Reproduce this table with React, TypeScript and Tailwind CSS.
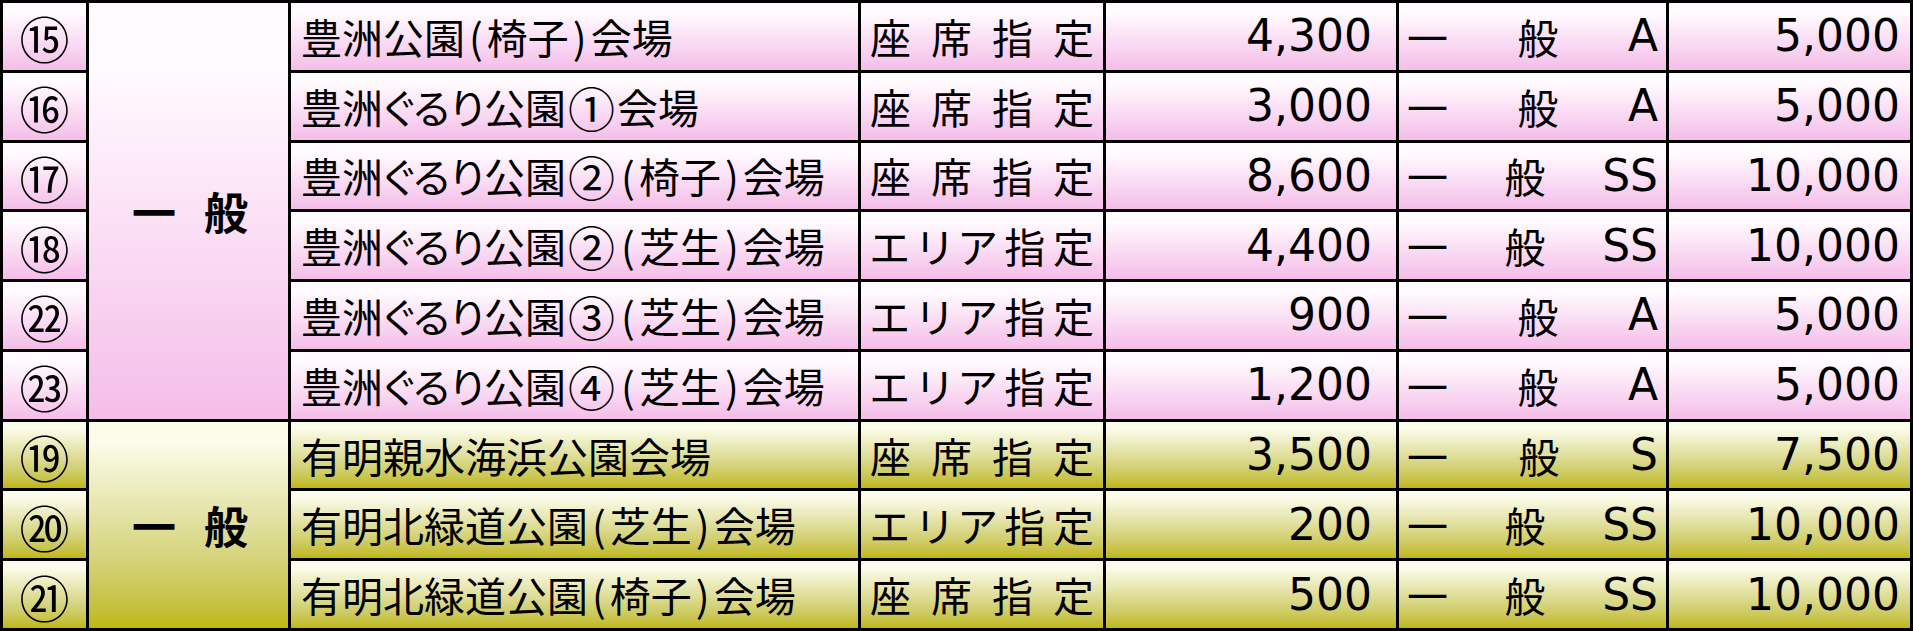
type Row = {
  no: string;
  venue: string;
  kind: string;
  seats: string;
  grade: string;
  price: string;
  group: 'pink' | 'olive';
};

const rows: Row[] = [
  { no: '⑮', venue: '豊洲公園(椅子)会場', kind: '座席指定', seats: '4,300', grade: 'A', price: '5,000', group: 'pink' },
  { no: '⑯', venue: '豊洲ぐるり公園①会場', kind: '座席指定', seats: '3,000', grade: 'A', price: '5,000', group: 'pink' },
  { no: '⑰', venue: '豊洲ぐるり公園②(椅子)会場', kind: '座席指定', seats: '8,600', grade: 'SS', price: '10,000', group: 'pink' },
  { no: '⑱', venue: '豊洲ぐるり公園②(芝生)会場', kind: 'エリア指定', seats: '4,400', grade: 'SS', price: '10,000', group: 'pink' },
  { no: '㉒', venue: '豊洲ぐるり公園③(芝生)会場', kind: 'エリア指定', seats: '900', grade: 'A', price: '5,000', group: 'pink' },
  { no: '㉓', venue: '豊洲ぐるり公園④(芝生)会場', kind: 'エリア指定', seats: '1,200', grade: 'A', price: '5,000', group: 'pink' },
  { no: '⑲', venue: '有明親水海浜公園会場', kind: '座席指定', seats: '3,500', grade: 'S', price: '7,500', group: 'olive' },
  { no: '⑳', venue: '有明北緑道公園(芝生)会場', kind: 'エリア指定', seats: '200', grade: 'SS', price: '10,000', group: 'olive' },
  { no: '㉑', venue: '有明北緑道公園(椅子)会場', kind: '座席指定', seats: '500', grade: 'SS', price: '10,000', group: 'olive' },
];

const fill = {
  pink: 'bg-linear-to-b from-[#fffbfe] from-15% to-[#f4bde9]',
  olive: 'bg-linear-to-b from-[#fcfcea] from-10% to-[#bfb900]',
};

const cjk = "font-['Noto_Sans_CJK_JP',sans-serif] [font-feature-settings:'palt']";
const latin = "font-['DejaVu_Sans','Noto_Sans_CJK_JP',sans-serif]";

// 括弧と丸数字だけ字幅を調整する
function Venue({ text }: { text: string }) {
  return (
    <>
      {text.split('').map((c, k) => {
        if (c === '(' || c === ')') {
          return (
            <span key={k} className="mx-[4px]">
              {c}
            </span>
          );
        }
        if ('①②③④'.includes(c)) {
          return (
            <span key={k} className="[font-feature-settings:normal] text-[47px] mx-[2px]">
              {c}
            </span>
          );
        }
        return c;
      })}
    </>
  );
}

export default function App() {
  return (
    <div className="w-[1913px] h-[631px] bg-black p-[3px] grid grid-cols-[83px_199px_567px_242px_290px_267px_241px] grid-rows-9 gap-[3px] text-black">
      {rows.map((r, i) => (
        <>
          {/* 番号 */}
          <div key={`no-${i}`} className={`${fill[r.group]} flex items-center justify-center font-['Noto_Sans_CJK_JP',sans-serif] text-[50px] leading-none pt-[2px]`}>
            {r.no}
          </div>

          {/* 区分（結合セル） */}
          {(i === 0 || i === 6) && (
            <div
              key={`grp-${i}`}
              className={`${fill[r.group]} ${i === 0 ? 'row-span-6' : 'row-span-3'} flex items-center justify-center gap-[28px] font-['Noto_Sans_CJK_JP',sans-serif] font-bold text-[44px] leading-none pl-[3px]`}
            >
              <span>一</span>
              <span>般</span>
            </div>
          )}

          {/* 会場 */}
          <div key={`venue-${i}`} className={`${fill[r.group]} flex items-center pl-[10px] ${cjk} text-[41px] leading-none whitespace-nowrap`}>
            <Venue text={r.venue} />
          </div>

          {/* 指定 */}
          <div key={`kind-${i}`} className={`${fill[r.group]} flex items-center justify-between px-[9px] ${cjk} text-[41px] leading-none`}>
            {r.kind.split('').map((c, k) => (
              <span key={k}>{c}</span>
            ))}
          </div>

          {/* 席数 */}
          <div key={`seats-${i}`} className={`${fill[r.group]} flex items-center justify-end pr-[24px] ${latin} text-[44px] leading-none`}>
            {r.seats}
          </div>

          {/* 券種 */}
          <div key={`grade-${i}`} className={`${fill[r.group]} flex items-center justify-between px-[8px] text-[41px] leading-none`}>
            <span className={cjk}>一</span>
            <span className={cjk}>般</span>
            <span className={`${latin} text-[44px]`}>{r.grade}</span>
          </div>

          {/* 料金 */}
          <div key={`price-${i}`} className={`${fill[r.group]} flex items-center justify-end pr-[10px] ${latin} text-[44px] leading-none`}>
            {r.price}
          </div>
        </>
      ))}
    </div>
  );
}
